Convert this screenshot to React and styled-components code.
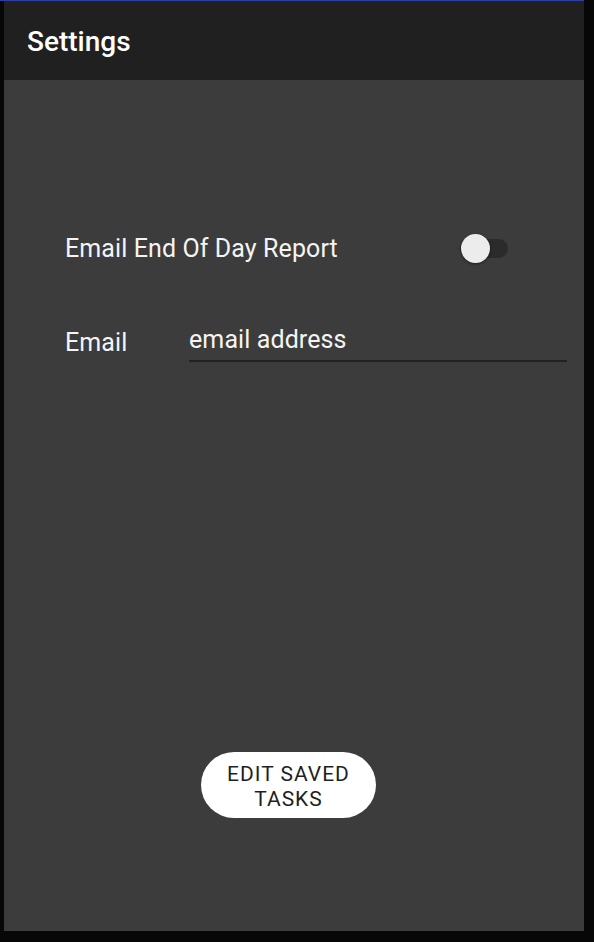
import React, { useState } from 'react';
import styled, { createGlobalStyle } from 'styled-components';

const GlobalStyle = createGlobalStyle`
  html, body {
    margin: 0;
    padding: 0;
    background: #070707;
    font-family: Roboto, "Noto Sans", sans-serif;
  }
`;

//Component
const App = () => {
  const [report, setReport] = useState(false);
  const [email, setEmail] = useState('');

  return (
    <>
      <GlobalStyle />
      <Device>
        <Screen>
          <Header>Settings</Header>
          <Content>
            <ToggleRow>
              <Label>Email End Of Day Report</Label>
              <Track on={report} onClick={() => setReport(!report)}>
                <Thumb on={report} />
              </Track>
            </ToggleRow>
            <FieldRow>
              <FieldLabel>Email</FieldLabel>
              <EmailInput
                placeholder='email address'
                value={email}
                onChange={e => setEmail(e.target.value)}
              />
            </FieldRow>
            <ButtonWrap>
              <PillButton>
                EDIT SAVED
                <br />
                TASKS
              </PillButton>
            </ButtonWrap>
          </Content>
        </Screen>
      </Device>
    </>
  );
};

export default App;

const Device = styled.div`
  width: 584px;
  border-top: 1px solid #2c3fa8;
  background: #070707;
`;

const Screen = styled.div`
  margin-left: 4px;
  display: flex;
  flex-direction: column;
`;

const Header = styled.div`
  height: 79px;
  box-sizing: border-box;
  display: flex;
  align-items: center;
  padding: 2px 0 0 23px;
  background: #202020;
  color: #ffffff;
  font-size: 28px;
  font-weight: 500;
`;

const Content = styled.div`
  height: 851px;
  box-sizing: border-box;
  padding-top: 154px;
  padding-bottom: 113px;
  display: flex;
  flex-direction: column;
  background: #3c3c3c;
`;

const ToggleRow = styled.div`
  height: 30px;
  display: flex;
  align-items: center;
  justify-content: space-between;
  padding: 0 76px 0 61px;
`;

const Label = styled.span`
  color: #f4f4f4;
  font-size: 25px;
  line-height: 28px;
  letter-spacing: 0.1px;
`;

const Track = styled.div`
  position: relative;
  top: -1px;
  width: 48px;
  height: 19px;
  border-radius: 10px;
  background: ${p => (p.on ? '#7f8ad0' : '#2b2b2b')};
  cursor: pointer;
`;

const Thumb = styled.div`
  position: absolute;
  top: -5px;
  left: ${p => (p.on ? '19px' : '1px')};
  width: 29px;
  height: 29px;
  border-radius: 50%;
  background: ${p => (p.on ? '#3f51b5' : '#ececec')};
  box-shadow: 0 1px 3px rgba(0, 0, 0, 0.45);
`;

const FieldRow = styled.div`
  margin-top: 60px;
  display: flex;
  align-items: center;
  padding: 0 17px 0 61px;
`;

const FieldLabel = styled.span`
  width: 124px;
  color: #f4f4f4;
  font-size: 25px;
  line-height: 28px;
  letter-spacing: 0.1px;
`;

const EmailInput = styled.input`
  flex: 1;
  min-width: 0;
  padding: 2px 0 6px;
  border: none;
  border-bottom: 2px solid #222222;
  background: transparent;
  color: #ffffff;
  font-family: Roboto, "Noto Sans", sans-serif;
  font-size: 25px;
  line-height: 28px;
  letter-spacing: 0.1px;
  outline: none;

  &::placeholder {
    color: #f4f4f4;
    opacity: 1;
  }
`;

const ButtonWrap = styled.div`
  margin-top: auto;
  padding-left: 197px;
`;

const PillButton = styled.button`
  width: 175px;
  height: 66px;
  padding: 4px 0 0;
  border: none;
  border-radius: 33px;
  background: #ffffff;
  color: #1f1f1f;
  font-family: Roboto, "Noto Sans", sans-serif;
  font-size: 21px;
  line-height: 25px;
  letter-spacing: 1px;
  cursor: pointer;
`;
